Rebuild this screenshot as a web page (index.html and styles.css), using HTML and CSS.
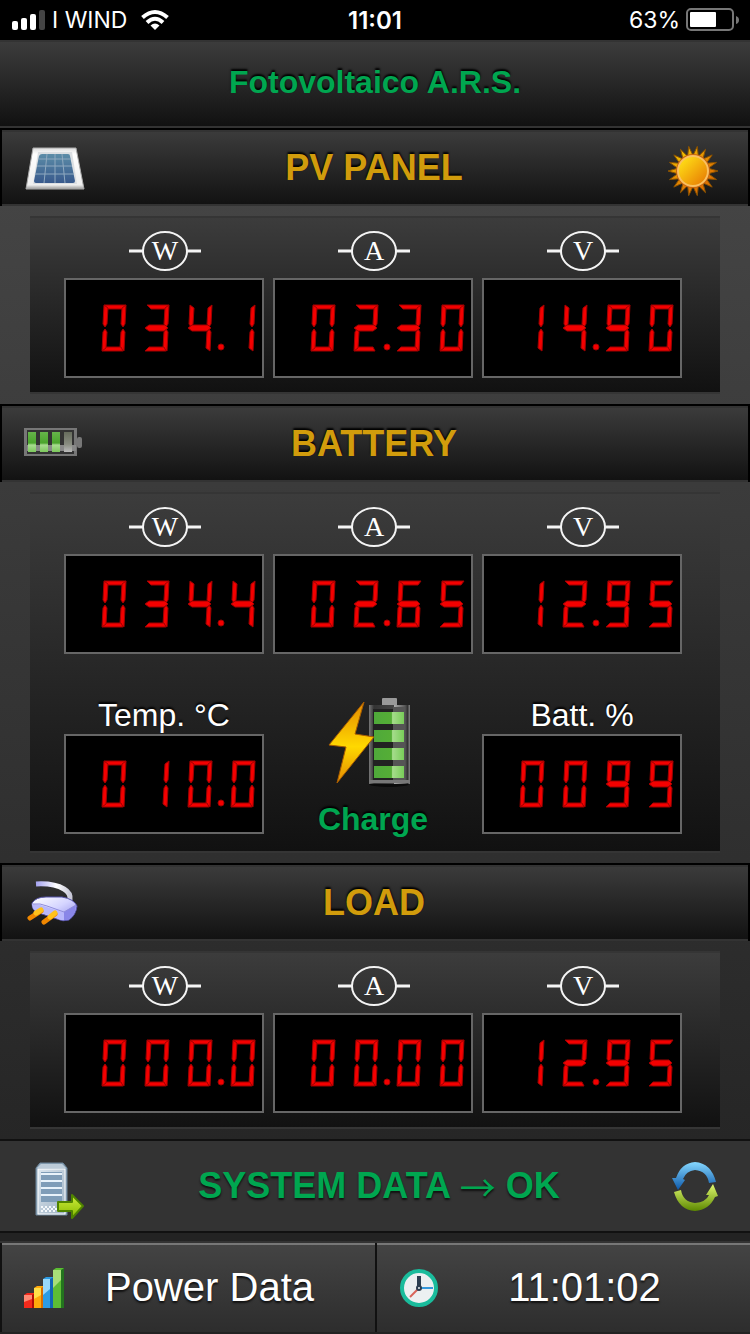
FILE: index.html
```html
<!DOCTYPE html>
<html lang="en">
<head>
    <meta charset="UTF-8">
    <meta name="viewport" content="width=device-width">
    <title>Fotovoltaico A.R.S.</title>
    <link rel="stylesheet" href="styles.css">
</head>
<body>
    <!-- status bar -->
    <div class="status">
        <div class="status-left">
            <svg width="34" height="20" viewBox="0 0 34 20">
                <g fill="#fff">
                    <rect x="0" y="11" width="6" height="9" rx="2"/>
                    <rect x="9" y="8" width="6" height="12" rx="2"/>
                    <rect x="18" y="4" width="6" height="16" rx="2"/>
                </g>
                <rect x="27" y="0" width="6" height="20" rx="2" fill="#444"/>
            </svg>
            <span class="carrier">I WIND</span>
            <svg width="28" height="20" viewBox="0 0 28 20">
                <g fill="none" stroke="#fff" stroke-width="4">
                    <path d="M1.500 7.500Q14-3.500 26.500 7.500"/>
                    <path d="M6 12.500Q14 5 22 12.500"/>
                </g>
                <path d="M9.500 15.500Q14 11.500 18.500 15.500L14 20Z" fill="#fff"/>
            </svg>
        </div>
        <b class="status-time">11:01</b>
        <div class="status-right">
            <span>63%</span>
            <svg width="52" height="24" viewBox="0 0 52 24">
                <rect x="1" y="1" width="46" height="21" rx="4" fill="none" stroke="#777" stroke-width="2"/>
                <rect x="4" y="4" width="26" height="15" rx="1" fill="#fff"/>
                <path d="M50 8q3 1 3 4t-3 4z" fill="#777"/>
            </svg>
        </div>
    </div>

    <header class="title">
        <h1>Fotovoltaico A.R.S.</h1>
    </header>

    <main>
        <!-- pv panel -->
        <section>
            <div class="bar">
                <svg class="icon" viewBox="0 0 60 60">
                    <defs>
                        <linearGradient id="frame" x1="0" y1="0" x2="0" y2="1">
                            <stop offset="0" stop-color="#ddd"/>
                            <stop offset=".15" stop-color="#fff"/>
                            <stop offset=".9" stop-color="#eee"/>
                            <stop offset="1" stop-color="#999"/>
                        </linearGradient>
                        <linearGradient id="cells" x1="0" y1="0" x2="0" y2="1">
                            <stop offset="0" stop-color="#5c8da8"/>
                            <stop offset="1" stop-color="#38598c"/>
                        </linearGradient>
                    </defs>
                    <path d="M9 10H52L60 51H2Z" fill="url(#frame)" stroke="#aaa"/>
                    <path d="M14 14H48L53 46H9Z" fill="#dcdfe2"/>
                    <path d="M18 16H44Q46 16 46 18L51 43Q51 45 49 45H12Q10 45 10 43L15 18Q16 16 18 16Z" fill="url(#cells)"/>
                    <g stroke="#8fa9bf" stroke-width="1">
                        <path d="M15 21H47M13 28H48M11 36H50"/>
                        <path d="M23 16L20 45M31 16V45M38 16L41 45"/>
                    </g>
                </svg>
                <h2>PV PANEL</h2>
                <svg class="icon" viewBox="0 0 60 60">
                    <defs>
                        <radialGradient id="rays" gradientUnits="userSpaceOnUse" cx="20" cy="20" r="36">
                            <stop offset="0" stop-color="#f0c400"/>
                            <stop offset="1" stop-color="#dc6c00"/>
                        </radialGradient>
                        <linearGradient id="disc" x1="0" y1="0" x2="1" y2="1">
                            <stop offset=".1" stop-color="#ffe016"/>
                            <stop offset=".9" stop-color="#e87e04"/>
                        </linearGradient>
                    </defs>
                    <path id="sun-rays" fill="url(#rays)" stroke="#8a5200"/>
                    <circle cx="29" cy="33" r="17" fill="#c86414"/>
                    <circle cx="29" cy="33" r="15" fill="url(#disc)" stroke="#fac060" stroke-width="2"/>
                </svg>
            </div>
            <div class="panel">
                <div class="meters">
                    <div class="meter">
                        <svg class="unit" viewBox="0 0 72 40"><use href="#ring"/><text x="37" y="29">W</text></svg>
                        <svg class="led" data-value="034.1"></svg>
                    </div>
                    <div class="meter">
                        <svg class="unit" viewBox="0 0 72 40"><use href="#ring"/><text x="37" y="29">A</text></svg>
                        <svg class="led" data-value="02.30"></svg>
                    </div>
                    <div class="meter">
                        <svg class="unit" viewBox="0 0 72 40"><use href="#ring"/><text x="37" y="29">V</text></svg>
                        <svg class="led" data-value="14.90"></svg>
                    </div>
                </div>
            </div>
        </section>

        <!-- battery -->
        <section>
            <div class="bar">
                <svg class="icon" viewBox="0 0 60 60">
                    <defs>
                        <linearGradient id="charge" x1="0" y1="0" x2="0" y2="1">
                            <stop offset="0" stop-color="#66b44a"/>
                            <stop offset=".55" stop-color="#4aa52c"/>
                            <stop offset=".65" stop-color="#a8dc90"/>
                            <stop offset="1" stop-color="#7cc85c"/>
                        </linearGradient>
                        <linearGradient id="empty" x1="0" y1="0" x2="0" y2="1">
                            <stop offset="0" stop-color="#666c5c"/>
                            <stop offset=".6" stop-color="#888c80"/>
                            <stop offset="1" stop-color="#bbb"/>
                        </linearGradient>
                    </defs>
                    <rect x="1" y="15" width="51" height="26" fill="#333"/>
                    <rect x="0" y="14" width="53" height="2" fill="#777"/>
                    <rect x="0" y="40" width="53" height="2" fill="#777"/>
                    <rect x="0" y="16" width="3" height="24" fill="#777"/>
                    <rect x="50" y="16" width="3" height="24" fill="#777"/>
                    <rect x="53" y="23" width="5" height="11" rx="2" fill="#777"/>
                    <rect x="3" y="31" width="49" height="6" fill="#888"/>
                    <g fill="url(#charge)">
                        <rect x="4" y="18" width="8" height="20"/>
                        <rect x="16" y="18" width="8" height="20"/>
                        <rect x="28" y="18" width="8" height="20"/>
                    </g>
                    <rect x="40" y="18" width="8" height="20" fill="url(#empty)"/>
                </svg>
                <h2>BATTERY</h2>
                <span class="icon"></span>
            </div>
            <div class="panel">
                <div class="meters">
                    <div class="meter">
                        <svg class="unit" viewBox="0 0 72 40"><use href="#ring"/><text x="37" y="29">W</text></svg>
                        <svg class="led" data-value="034.4"></svg>
                    </div>
                    <div class="meter">
                        <svg class="unit" viewBox="0 0 72 40"><use href="#ring"/><text x="37" y="29">A</text></svg>
                        <svg class="led" data-value="02.65"></svg>
                    </div>
                    <div class="meter">
                        <svg class="unit" viewBox="0 0 72 40"><use href="#ring"/><text x="37" y="29">V</text></svg>
                        <svg class="led" data-value="12.95"></svg>
                    </div>
                </div>
                <div class="meters levels">
                    <div class="meter">
                        <span class="label">Temp. °C</span>
                        <svg class="led" data-value="010.0"></svg>
                    </div>
                    <div class="meter state">
                        <svg width="88" height="90" viewBox="1 1 88 90">
                            <defs>
                                <linearGradient id="bolt" x1="0" y1="0" x2="0" y2="1">
                                    <stop offset="0" stop-color="#e58a00"/>
                                    <stop offset=".55" stop-color="#ffd800"/>
                                    <stop offset="1" stop-color="#e58a00"/>
                                </linearGradient>
                                <linearGradient id="case" x1="0" y1="0" x2="1" y2="0">
                                    <stop offset="0" stop-color="#777"/>
                                    <stop offset=".12" stop-color="#333"/>
                                    <stop offset=".6" stop-color="#444"/>
                                    <stop offset=".62" stop-color="#aaa"/>
                                    <stop offset=".88" stop-color="#555"/>
                                    <stop offset=".94" stop-color="#333"/>
                                    <stop offset="1" stop-color="#888"/>
                                </linearGradient>
                                <linearGradient id="cell" x1="0" y1="0" x2="1" y2="0">
                                    <stop offset="0" stop-color="#4fa93a"/>
                                    <stop offset=".58" stop-color="#55ae36"/>
                                    <stop offset=".62" stop-color="#a6dc8c"/>
                                    <stop offset="1" stop-color="#78cc58"/>
                                </linearGradient>
                            </defs>
                            <ellipse cx="61" cy="88" rx="20" ry="3" fill="#0a0a0a"/>
                            <rect x="54" y="2" width="15" height="8" rx="1" fill="#999"/>
                            <rect x="41" y="9" width="41" height="79" fill="url(#case)"/>
                            <rect x="45" y="13" width="32" height="72" fill="#222"/>
                            <rect x="65" y="11" width="12" height="74" fill="#555"/>
                            <rect x="41" y="84" width="41" height="3" fill="#777"/>
                            <g fill="url(#cell)">
                                <rect x="46" y="16" width="30" height="12"/>
                                <rect x="46" y="34" width="30" height="12"/>
                                <rect x="46" y="52" width="30" height="12"/>
                                <rect x="46" y="70" width="30" height="12"/>
                            </g>
                            <path d="M36 6L27 38L46 41L9 87L18 51L1 49Z" fill="url(#bolt)" stroke="#a85c00" stroke-width="1"/>
                        </svg>
                        <strong>Charge</strong>
                    </div>
                    <div class="meter">
                        <span class="label">Batt. %</span>
                        <svg class="led" data-value="0099"></svg>
                    </div>
                </div>
            </div>
        </section>

        <!-- load -->
        <section>
            <div class="bar">
                <svg class="icon" viewBox="0 0 60 60">
                    <defs>
                        <linearGradient id="cord" x1="0" y1="0" x2="1" y2="0">
                            <stop offset="0" stop-color="#a4a2f0"/>
                            <stop offset=".6" stop-color="#fff"/>
                            <stop offset="1" stop-color="#c8c8d8"/>
                        </linearGradient>
                        <linearGradient id="plug" x1="0" y1="0" x2="1" y2="1">
                            <stop offset="0" stop-color="#fff"/>
                            <stop offset=".5" stop-color="#d4d4ff"/>
                            <stop offset="1" stop-color="#8c88e8"/>
                        </linearGradient>
                    </defs>
                    <path d="M12 11Q30 10 40 16Q47 20 46 27" fill="none" stroke="url(#cord)" stroke-width="5"/>
                    <path d="M8 30Q12 24 22 24H38Q50 26 53 33Q52 42 45 47Q39 49 33 46L12 39Q7 35 8 30Z" fill="url(#plug)" stroke="#5552aa"/>
                    <path d="M8 31Q16 31 23 34L40 40L41 47Q37 48 32 45L12 38Q8 36 8 31Z" fill="#b9b8fb"/>
                    <path d="M40 39L52 32Q52 42 44 47H40Z" fill="#8986e8"/>
                    <path d="M9 31Q16 30 23 33L40 39L52 32" fill="none" stroke="#8f8cdc"/>
                    <g stroke-width="5" stroke-linecap="round">
                        <path d="M17 38L6 45M31 41L20 49" stroke="#f08700"/>
                        <path d="M17 37L12 40M31 40L26 44" stroke="#ffc21c"/>
                    </g>
                </svg>
                <h2>LOAD</h2>
                <span class="icon"></span>
            </div>
            <div class="panel">
                <div class="meters">
                    <div class="meter">
                        <svg class="unit" viewBox="0 0 72 40"><use href="#ring"/><text x="37" y="29">W</text></svg>
                        <svg class="led" data-value="000.0"></svg>
                    </div>
                    <div class="meter">
                        <svg class="unit" viewBox="0 0 72 40"><use href="#ring"/><text x="37" y="29">A</text></svg>
                        <svg class="led" data-value="00.00"></svg>
                    </div>
                    <div class="meter">
                        <svg class="unit" viewBox="0 0 72 40"><g id="ring" fill="none" stroke="#f4f4f4" stroke-width="2"><ellipse cx="37" cy="20" rx="22" ry="19"/><path d="M1 20H15M59 20H73" stroke-width="3"/></g><text x="37" y="29">V</text></svg>
                        <svg class="led" data-value="12.95"></svg>
                    </div>
                </div>
            </div>
        </section>
    </main>

    <footer>
        <div class="system">
            <svg class="icon" viewBox="0 0 60 60">
                <defs>
                    <linearGradient id="tower" x1="0" y1="0" x2="1" y2="1">
                        <stop offset="0" stop-color="#dde7ef"/>
                        <stop offset="1" stop-color="#9db1c3"/>
                    </linearGradient>
                    <linearGradient id="arrow" x1="0" y1="0" x2="0" y2="1">
                        <stop offset="0" stop-color="#d0ee3c"/>
                        <stop offset="1" stop-color="#84b800"/>
                    </linearGradient>
                </defs>
                <path d="M12 12L16 7H39L43 12V59H12Z" fill="#8ea6bb" stroke="#6e879c"/>
                <path d="M13 12L17 8H38L42 12Z" fill="#bccbd8"/>
                <rect x="14" y="13" width="27" height="45" fill="url(#tower)" stroke="#fff"/>
                <rect x="17" y="16" width="21" height="30" fill="#7f9db8"/>
                <path d="M17 18H38M17 25H38M17 32H38M17 39H38" stroke="#e8f2fa" stroke-width="2"/>
                <path d="M17 51H36M17 55H36" stroke="#f4f8fb" stroke-width="2" stroke-dasharray="2 2"/>
                <path d="M19 53H36" stroke="#f4f8fb" stroke-width="2" stroke-dasharray="2 2"/>
                <path d="M34 46H48V39L59 50L48 62V55H34Z" fill="url(#arrow)" stroke="#4f8300" stroke-width="2" stroke-linejoin="round"/>
            </svg>
            <h2>SYSTEM DATA <span class="arrow">→</span> OK</h2>
            <button class="refresh" type="button" aria-label="Refresh">
                <svg class="icon" viewBox="0 0 60 60">
                    <defs>
                        <linearGradient id="blue" x1="0" y1="0" x2="0" y2="1">
                            <stop offset="0" stop-color="#86d8ff"/>
                            <stop offset="1" stop-color="#0c58aa"/>
                        </linearGradient>
                        <linearGradient id="green" x1="0" y1="0" x2="0" y2="1">
                            <stop offset="0" stop-color="#e0f870"/>
                            <stop offset="1" stop-color="#5c8800"/>
                        </linearGradient>
                    </defs>
                    <path d="M8 22L12 22Q17 7 31 6Q47 7 52 26L45 27Q43 15 31 14Q22 15 19 23L21 24L14 34Z" fill="url(#blue)"/>
                    <path d="M10 36L17 34Q19 46 31 47Q42 46 45 39L42 39L49 28L54 40L51 41Q45 54 31 55Q15 54 10 36Z" fill="url(#green)"/>
                </svg>
            </button>
        </div>
        <nav class="tabs">
            <a href="#power">
                <svg width="40" height="42" viewBox="0 0 40 42">
                    <path d="M0 28L3 26H11V41H0Z" fill="#f42a1c"/>
                    <path d="M8 28L11 26V41H8Z" fill="#b00c08"/>
                    <path d="M10 21L13 19H20V41H10Z" fill="#ffa90c"/>
                    <path d="M17 21L20 19V41H17Z" fill="#d86d00"/>
                    <path d="M19 12L22 10H30V41H19Z" fill="#2d9ce4"/>
                    <path d="M26 12L30 10V41H26Z" fill="#1265b4"/>
                    <path d="M29 3L32 1H40V41H29Z" fill="#5dbd34"/>
                    <path d="M37 3L40 1V41H37Z" fill="#23741e"/>
                    <path d="M0 28H8V32L0 35Z" fill="#ff8a74"/>
                    <path d="M10 21H17V28L10 32Z" fill="#ffdf48"/>
                    <path d="M19 12H26V22L19 28Z" fill="#98d8fb"/>
                    <path d="M29 3H37V13L29 21Z" fill="#a8df78"/>
                </svg>
                <span>Power Data</span>
            </a>
            <a href="#clock">
                <svg width="40" height="40" viewBox="0 0 40 40">
                    <circle cx="20" cy="20" r="17" fill="#ecf0f1" stroke="#1abc9c" stroke-width="4"/>
                    <path d="M19 21L11 29" stroke="#d96459" stroke-width="2"/>
                    <path d="M21 20H34" stroke="#3498db" stroke-width="2"/>
                    <path d="M20 8V19" stroke="#2c3e50" stroke-width="4"/>
                    <circle cx="20" cy="20" r="2" fill="#ecf0f1" stroke="#2c3e50" stroke-width="2"/>
                </svg>
                <span>11:01:02</span>
            </a>
        </nav>
    </footer>

    <script src="script.js"></script>
</body>
</html>
```
FILE: styles.css
```css
* { box-sizing: border-box; }
body {
    margin: 0;
    min-height: 100vh;
    display: flex;
    flex-direction: column;
    font-family: "Liberation Sans", Helvetica, Arial, sans-serif;
    color: #fff;
    background: linear-gradient(#444 15%, #222 95%);
}
h1, h2 { margin: 0; line-height: 40px; text-align: center; }
svg { display: block; flex: none; overflow: visible; }

/* status bar */
.status {
    display: grid;
    grid-template-columns: 1fr auto 1fr;
    align-items: center;
    height: 40px;
    padding: 0 12px;
    background: #000;
    font-family: Inter, "Liberation Sans", sans-serif;
    font-size: 23px;
}
.status-left, .status-right { display: flex; align-items: center; gap: 6px; }
.status-right { justify-content: flex-end; }
.carrier { margin-right: 8px; }
.status-time { font-size: 24px; font-weight: 600; }

/* title and section bars */
.title {
    border-top: 2px solid #333;
    border-bottom: 2px solid #333;
    background: linear-gradient(#3c3c3c, #111);
    padding: 20px 0 24px;
    text-shadow: 0 -2px 2px #000;
}
.title h1 { font-size: 32px; color: #00a650; }
.bar {
    display: flex;
    align-items: center;
    height: 78px;
    padding: 0 24px 0 22px;
    border: 2px solid #000;
    border-bottom: 0;
    background: linear-gradient(#3c3c3c, #111);
    box-shadow: inset 0 2px #333, inset 0 -2px #333;
}
.bar h2, .system h2 { flex: 1; font-size: 36px; }
.bar h2 {
    color: #d19c0c;
    text-shadow: 0 -2px 2px #000;
}
.icon { width: 60px; height: 60px; flex: none; }

/* readouts */
.panel {
    margin: 10px 30px;
    padding: 13px 38px 14px 34px;
    border-top: 2px solid #353535;
    border-bottom: 2px solid #353535;
    background: linear-gradient(#3c3c3c, #111);
}
.meters {
    display: grid;
    grid-template-columns: repeat(3, 1fr);
    gap: 9px;
}
.meter {
    display: flex;
    flex-direction: column;
    align-items: center;
}
.unit {
    width: 72px;
    height: 40px;
    margin-bottom: 7px;
}
.unit text {
    font: 28px "Liberation Serif", serif;
    fill: #fff;
    text-anchor: middle;
}
.led {
    width: 100%;
    height: 100px;
    border: 2px solid #666;
    background: #000;
}
.led path, .led circle {
    fill: #f40000;
    stroke: #a00000;
    stroke-width: 1px;
}
.levels { margin-top: 43px; }
.label {
    font-size: 32px;
    line-height: 37px;
    text-shadow: 0 -2px 2px #000;
}
.state strong {
    margin-top: 14px;
    font-size: 32px;
    line-height: 36px;
    color: #00a650;
    text-shadow: 0 -2px 2px #000;
}

/* footer */
footer { margin-top: auto; }
.system {
    display: flex;
    align-items: center;
    height: 94px;
    padding: 0 26px 0 24px;
    border-top: 2px solid #111;
    border-bottom: 2px solid #111;
    background: #333;
}
.system h2 {
    padding-left: 10px;
    color: #00a650;
    text-shadow: 0 2px 2px #111;
}
.arrow {
    font-family: "Noto Sans CJK JP", sans-serif;
    font-weight: 400;
    line-height: 24px;
    vertical-align: -4px;
}
.refresh { padding: 0; border: 0; background: none; cursor: pointer; }
.tabs {
    display: grid;
    grid-template-columns: 1fr 1fr;
    margin-top: 8px;
    border-top: 2px solid #333;
    border-bottom: 2px solid #222;
}
.tabs a {
    display: flex;
    align-items: center;
    height: 89px;
    padding: 0 20px 0 22px;
    border-left: 2px solid #111;
    background: linear-gradient(#444, #2d2d2d);
    box-shadow: inset 0 2px #777;
    color: #fff;
    font-size: 40px;
    text-decoration: none;
    text-shadow: 0 2px 2px #111;
}
.tabs span { flex: 1; text-align: center; }
```
FILE: script.js
```js
// segment shapes of one digit, 25 x 48
const SEGMENTS = {
    a: "M2 1H24L21 5H6Z",
    b: "M24 1L23 20L21 23L19 20L20 4Z",
    c: "M21 25L23 28L22 47L18 44L19 28Z",
    d: "M4 43H19L21 47H0Z",
    e: "M3 25L5 28L4 44L0 47L1 28Z",
    f: "M2 1L6 4L5 20L3 23L1 20Z",
    g: "M4 21H20L23 24L19 27H4L0 24Z"
};
const DIGITS = ["abcdef", "bc", "abdeg", "abcdg", "bcfg", "acdfg", "acdefg", "abc", "abcdefg", "abcdfg"];

document.querySelectorAll(".led").forEach(led => {
    const value = led.dataset.value;
    let out = "";
    let pos = 0;
    for (const ch of value) {
        if (ch === ".") {
            out += `<circle cx="${-10 + pos * 43}" cy="43" r="3"/>`;
            continue;
        }
        const shapes = [...DIGITS[ch]].map(s => `<path d="${SEGMENTS[s]}"/>`).join("");
        out += `<g transform="translate(${pos * 43} 0)">${shapes}</g>`;
        pos++;
    }
    led.setAttribute("viewBox", "0 0 196 96");
    led.setAttribute("role", "img");
    led.setAttribute("aria-label", value);
    led.innerHTML = `<g transform="translate(36 24)">${out}</g>`;
});

// sun rays around the disc
let rays = "";
const point = (r, deg) => {
    const a = deg * Math.PI / 180;
    return `${(29 + r * Math.cos(a)).toFixed(1)} ${(33 + r * Math.sin(a)).toFixed(1)}`;
};
for (let i = 0; i < 18; i++) {
    rays += `M${point(15, i * 20 - 11)}L${point(25, i * 20)}L${point(15, i * 20 + 11)}Z`;
}
document.getElementById("sun-rays").setAttribute("d", rays);
```
